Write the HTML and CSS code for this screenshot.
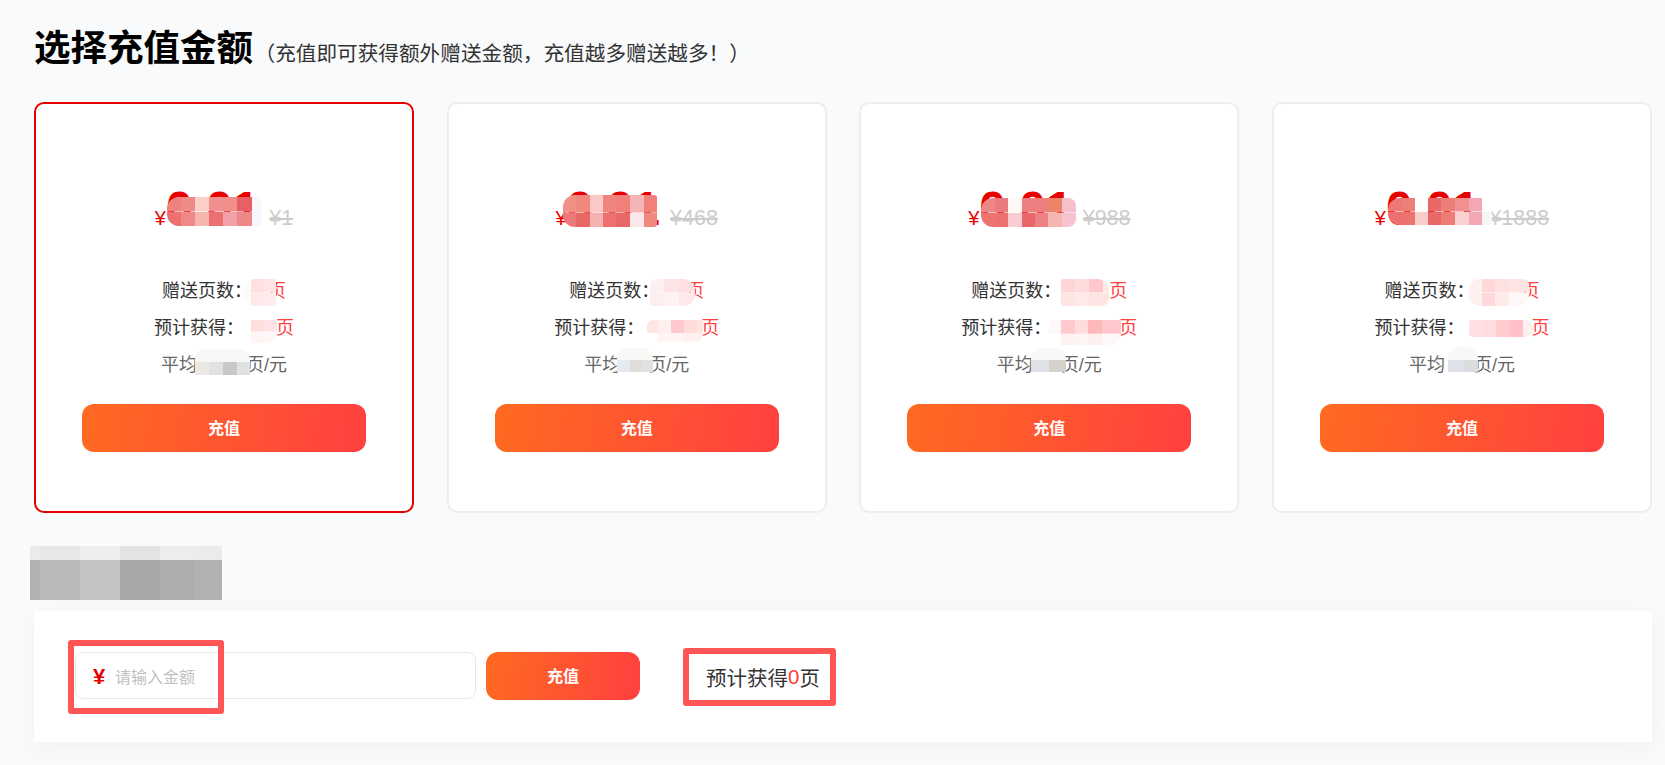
FILE: index.html
```html
<!DOCTYPE html>
<html lang="zh-CN">
<head>
  <meta charset="UTF-8" />
  <meta name="viewport" content="width=device-width, initial-scale=1.0"/>
  <title>充值</title>
  <link rel="stylesheet" href="styles.css">
</head>
<body>
  <div class="page">
    <div class="head">
      <h1>选择充值金额</h1>
      <span class="head-note">（充值即可获得额外赠送金额，充值越多赠送越多！）</span>
    </div>

    <div class="cards">
      <div class="card active">
        <div class="price"><span class="yen">¥</span><span class="num">0.01</span><span class="old">¥1</span></div>
        <div class="line">赠送页数：<span class="val w16"></span><span class="red">页</span></div>
        <div class="line">预计获得：<span class="val w32"></span><span class="red">页</span></div>
        <div class="line grey">平均<span class="val w49"></span>页/元</div>
        <button class="btn btn-card">充值</button>
        <i class="blur m1p"></i><i class="blur m1a"></i><i class="blur m1b"></i><i class="blur m1c"></i>
      </div>

      <div class="card">
        <div class="price"><span class="yen">¥</span><span class="num">0.01</span><span class="old">¥468</span></div>
        <div class="line">赠送页数：<span class="val w27"></span><span class="red">页</span></div>
        <div class="line">预计获得：<span class="val w57"></span><span class="red">页</span></div>
        <div class="line grey">平均<span class="val w28"></span>页/元</div>
        <button class="btn btn-card">充值</button>
        <i class="blur m2p"></i><i class="blur m2a"></i><i class="blur m2b"></i><i class="blur m2c"></i>
      </div>

      <div class="card">
        <div class="price"><span class="yen">¥</span><span class="num">0.01</span><span class="old">¥988</span></div>
        <div class="line">赠送页数：<span class="val w48"></span><span class="red">页</span></div>
        <div class="line">预计获得：<span class="val w68"></span><span class="red">页</span></div>
        <div class="line grey">平均<span class="val w28"></span>页/元</div>
        <button class="btn btn-card">充值</button>
        <i class="blur m3p"></i><i class="blur m3a"></i><i class="blur m3b"></i><i class="blur m3c"></i>
      </div>

      <div class="card">
        <div class="price"><span class="yen">¥</span><span class="num">0.01</span><span class="old">¥1888</span></div>
        <div class="line">赠送页数：<span class="val w47"></span><span class="red">页</span></div>
        <div class="line">预计获得：<span class="val w67"></span><span class="red">页</span></div>
        <div class="line grey">平均<span class="val w29"></span>页/元</div>
        <button class="btn btn-card">充值</button>
        <i class="blur m4p"></i><i class="blur m4a"></i><i class="blur m4b"></i><i class="blur m4c"></i>
      </div>
    </div>

    <div class="custom-title"></div>

    <div class="custom">
      <div class="amount">
        <span class="amount-yen">¥</span>
        <input class="amount-input" type="text" placeholder="请输入金额">
      </div>
      <button class="btn btn-custom">充值</button>
      <div class="estimate">预计获得<span class="red">0</span>页</div>
      <div class="mark"></div>
    </div>
  </div>
</body>
</html>
```

FILE: styles.css
```css
* {
  box-sizing: border-box;
}
html, body {
  height: 100%;
}
body {
  margin: 0;
  overflow: hidden;
  background: #f9fafc;
  color: #333;
  font-family: "Liberation Sans", "Noto Sans CJK SC", sans-serif;
}
.page {
  padding: 29px 13px 0 34px;
}
.head {
  display: flex;
  align-items: baseline;
  margin-bottom: 33px;
}
h1 {
  margin: 0;
  font-size: 36.5px;
  line-height: 40px;
  font-weight: 700;
  color: #000;
}
.head-note {
  margin-left: 1.5px;
  font-size: 20.65px;
  color: #333;
}

/* cards */
.cards {
  display: grid;
  grid-template-columns: repeat(4, 1fr);
  gap: 32.67px;
}
.card {
  position: relative;
  height: 411px;
  padding-top: 81px;
  background: #fff;
  border: 2px solid #eee;
  border-radius: 10px;
  display: flex;
  flex-direction: column;
  align-items: center;
}
.card.active {
  border-color: #e60000;
}
.price {
  display: flex;
  align-items: baseline;
  height: 48px;
  line-height: 48px;
  margin-bottom: 40px;
  color: #e60000;
}
.yen {
  font-size: 20px;
}
.num {
  font-size: 48px;
  font-weight: 700;
}
.old {
  margin-left: 10px;
  font-size: 21.5px;
  color: #ccc;
  text-decoration: line-through;
}
.line {
  font-size: 18px;
  line-height: 37px;
  color: #333;
  white-space: nowrap;
}
.line.grey {
  color: #666;
}
.red {
  color: #ff4040;
}
.val {
  display: inline-block;
}
.w16 { width: 16px; }
.w27 { width: 27px; }
.w28 { width: 28px; }
.w29 { width: 29px; }
.w32 { width: 32px; }
.w47 { width: 47px; }
.w48 { width: 48px; }
.w49 { width: 49px; }
.w57 { width: 57px; }
.w67 { width: 67px; }
.w68 { width: 68px; }

.btn {
  border: none;
  border-radius: 12px;
  height: 48px;
  padding: 0 0 2px;
  background: linear-gradient(100deg, #ff6a20, #ff4040);
  color: #fff;
  font: 700 16px "Liberation Sans", "Noto Sans CJK SC", sans-serif;
  cursor: pointer;
}
.btn-card {
  width: 284px;
  margin-top: 20px;
}
.btn-custom {
  width: 154px;
  margin-left: 10px;
}

/* pixelated patches lying over the hidden numbers */
.blur {
  position: absolute;
  border-radius: 12px 3px 3px 12px;
}
.m1p { left: 131px; top: 93px; width: 94px; height: 29px; background: linear-gradient(90deg, #f08080 14px, #ee8a88 14px 28px, #fbd0c8 28px 42px, #f09090 42px 56px, #f09088 56px 70px, #e86066 70px 85px, #fbf5fd 85px) top/100% 50% no-repeat, linear-gradient(90deg, #ec7070 14px, #f08888 14px 28px, #f6b5ae 28px 42px, #ec7070 42px 56px, #f2a0a8 56px 70px, #ee8888 70px 85px, #fbf5fd 85px) bottom/100% 50% no-repeat; }
.m1a { left: 207px; top: 175px; width: 33px; height: 27px; background: linear-gradient(90deg, #fdfafa 8px, #fee0e0 8px 21px, #ffe5e5 21px) top/100% 50% no-repeat, linear-gradient(90deg, #fdfafa 8px, #ffe8ea 8px 21px, #ffecee 21px) bottom/100% 50% no-repeat; }
.m1b { left: 215px; top: 216px; width: 26px; height: 23px; border-radius: 2px 2px 10px 2px; background: linear-gradient(90deg, #ffdede 13px, #ffe2e6 13px) top/100% 50% no-repeat, linear-gradient(90deg, #fff5f5 13px, #fff8f8 13px) bottom/100% 50% no-repeat; }
.m1c { left: 159px; top: 245px; width: 55px; height: 26px; border-radius: 10px 10px 0 0; background: linear-gradient(#f8f7f6, #f8f7f6) top/100% 50% no-repeat, linear-gradient(90deg, #ece8e4 14px, #e0e2e0 14px 28px, #c8c8c8 28px 42px, #e0e2e0 42px) bottom/100% 50% no-repeat; }

.m2p { left: 114px; top: 91px; width: 94px; height: 32px; background: linear-gradient(90deg, #f29088 13px, #f08880 13px 27px, #fbc8c8 27px 40px, #f08580 40px 53px, #f08078 53px 67px, #f5b5b8 67px 81px, #f08078 81px) top/100% 55% no-repeat, linear-gradient(90deg, #ec7878 13px, #e86868 13px 27px, #f5b0b0 27px 40px, #ec7070 40px 53px, #e86868 53px 67px, #fce8ec 67px 81px, #f08880 81px) bottom/100% 45% no-repeat; }
.m2a { left: 201px; top: 175px; width: 45px; height: 27px; border-radius: 6px 12px 12px 2px; background: linear-gradient(90deg, #fdf0f0 14px, #fee4e6 14px 29px, #ffdfe2 29px) top/100% 50% no-repeat, linear-gradient(90deg, #fdeeef 14px, #fff2f2 14px 29px, #ffe8e8 29px) bottom/100% 50% no-repeat; }
.m2b { left: 198px; top: 216px; width: 56px; height: 22px; border-radius: 6px 2px 8px 2px; background: linear-gradient(90deg, #ffe4e4 11px, #fff0f0 11px 24px, #ffc8cc 24px 37px, #ffdcdc 37px 50px, #ffe4e0 50px) top/100% 60% no-repeat, linear-gradient(90deg, #fff 11px, #fff3f3 11px 37px, #fff0f0 37px) bottom/100% 40% no-repeat; }
.m2c { left: 168px; top: 244px; width: 36px; height: 24px; border-radius: 10px 10px 0 0; background: linear-gradient(#f8f8f6, #f8f8f6) top/100% 50% no-repeat, linear-gradient(90deg, #e4eaee 13px, #e0dcd8 13px 25px, #e0e2e2 25px) bottom/100% 50% no-repeat; }

.m3p { left: 120px; top: 94px; width: 95px; height: 29px; border-radius: 12px 8px 8px 12px; background: linear-gradient(90deg, #ee8888 14px, #e87a80 14px 27px, #fff8f4 27px 41px, #ec8080 41px 54px, #ec7e80 54px 67px, #ec8468 67px 81px, #f5c0cc 81px) top/100% 50% no-repeat, linear-gradient(90deg, #ee7470 14px, #ec7070 14px 27px, #f8ccd0 27px 41px, #e86868 41px 54px, #ec8084 54px 67px, #f5b5b0 67px 81px, #f5c4cc 81px) bottom/100% 50% no-repeat; }
.m3a { left: 200px; top: 175px; width: 48px; height: 27px; border-radius: 2px 12px 8px 2px; background: linear-gradient(90deg, #ffd4d6 14px, #ffdcdc 14px 28px, #ffc8cc 28px 42px, #ffe8e8 42px) top/100% 50% no-repeat, linear-gradient(90deg, #ffe4e4 14px, #ffe8e8 14px 28px, #ffe4e4 28px) bottom/100% 50% no-repeat; }
.m3b { left: 188px; top: 216px; width: 72px; height: 25px; border-radius: 6px 2px 10px 2px; background: linear-gradient(90deg, #fff8f8 12px, #ffc8cc 12px 26px, #ffdcdc 26px 39px, #ffb8bc 39px 53px, #ffc8cc 53px) top/100% 55% no-repeat, linear-gradient(90deg, #fff 12px, #fff2f2 12px 26px, #fff4f4 26px 39px, #fff0f0 39px 53px, #fff8f8 53px) bottom/100% 45% no-repeat; }
.m3c { left: 170px; top: 244px; width: 35px; height: 24px; border-radius: 10px 10px 0 0; background: linear-gradient(#f8f8f8, #f8f8f8) top/100% 50% no-repeat, linear-gradient(90deg, #dfe0e8 18px, #d4d0cc 18px) bottom/100% 50% no-repeat; }

.m4p { left: 114px; top: 94px; width: 104px; height: 27px; border-radius: 12px 3px 3px 12px; background: linear-gradient(90deg, #ee7878 13px, #ec8078 13px 27px, #fff 27px 40px, #e86868 40px 53px, #ec8078 53px 67px, #f09090 67px 81px, #f2a8b4 81px 94px, #fff 94px) top/100% 50% no-repeat, linear-gradient(90deg, #ec7070 13px, #ec7470 13px 27px, #f8ccc8 27px 40px, #e86868 40px 53px, #ec7c78 53px 67px, #fbd0d0 67px 81px, #f2a8b4 81px 94px, #f6f6f4 94px) bottom/100% 50% no-repeat; }
.m4a { left: 195px; top: 175px; width: 60px; height: 27px; border-radius: 10px 6px 12px 10px; background: linear-gradient(90deg, #fff0f0 13px, #ffd8d8 13px 26px, #ffe0e0 26px 40px, #ffe4e4 40px) top/100% 50% no-repeat, linear-gradient(90deg, #fff0f0 13px, #ffd8dc 13px 26px, #ffeaea 26px 40px, #fff8f8 40px) bottom/100% 50% no-repeat; }
.m4b { left: 195px; top: 216px; width: 64px; height: 17px; border-radius: 2px 8px 8px 4px; background: linear-gradient(90deg, #ffdfe4 14px, #ffdce0 14px 27px, #ffccd0 27px 40px, #ffc0c8 40px 54px, #ffeef0 54px); }
.m4c { left: 174px; top: 243px; width: 30px; height: 25px; border-radius: 12px 12px 0 0; background: linear-gradient(#f8f8f8, #f8f8f8) top/100% 50% no-repeat, linear-gradient(90deg, #dfe2ea 16px, #dadcde 16px) bottom/100% 50% no-repeat; }

.custom-title {
  width: 192px;
  height: 54px;
  margin: 33px 0 11px -4px;
  background: linear-gradient(90deg, #ebebeb 10px, #e6e7e6 10px 50px, #eeeeef 50px 90px, #e2e3e2 90px 130px, #ecedee 130px 164px, #eaebec 164px) top/100% 14px no-repeat, linear-gradient(90deg, #b0b1b0 10px, #b8b9b8 10px 50px, #c3c3c3 50px 90px, #a7a7a7 90px 130px, #acadae 130px 164px, #b0b1b0 164px) bottom/100% 40px no-repeat;
}

/* custom amount */
.custom {
  position: relative;
  height: 131px;
  padding: 0 0 2px 41px;
  display: flex;
  align-items: center;
  background: #fff;
  box-shadow: 0 6px 24px rgba(0, 0, 0, 0.04);
}
.amount {
  width: 401px;
  height: 47px;
  padding: 2px 0 0 17px;
  display: flex;
  align-items: center;
  border: 1px solid #e8e8e8;
  border-radius: 8px;
}
.amount-yen {
  width: 22px;
  font-size: 22px;
  font-weight: 700;
  color: #e60000;
}
.amount-input {
  flex: 1;
  border: none;
  outline: none;
  padding: 3px 0 0;
  font: 16px "Liberation Sans", "Noto Sans CJK SC", sans-serif;
  color: #333;
  background: transparent;
}
.amount-input::placeholder {
  color: #c0c0c0;
}
.estimate {
  width: 153px;
  height: 58px;
  margin: 2px 0 0 43px;
  padding-left: 17px;
  display: flex;
  align-items: center;
  font-size: 20.5px;
  color: #333;
  border: 6px solid #ff5555;
  border-radius: 3px;
}
.mark {
  position: absolute;
  left: 34px;
  top: 29px;
  width: 156px;
  height: 74px;
  border: 6px solid #ff5555;
  border-radius: 3px;
  pointer-events: none;
}
```
